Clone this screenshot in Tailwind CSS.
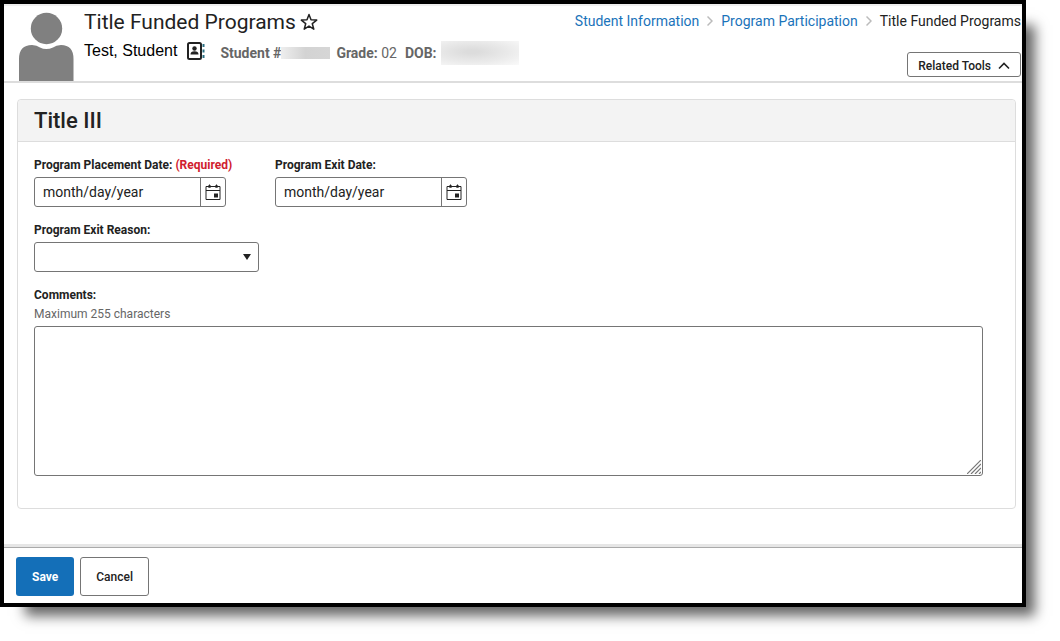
<!DOCTYPE html>
<html lang="en">
<head>
    <meta charset="UTF-8" />
    <meta name="viewport" content="width=device-width, initial-scale=1.0"/>
    <title>Title Funded Programs</title>
    <script src="https://cdn.jsdelivr.net/npm/@tailwindcss/browser@4"></script>
</head>
<body class="bg-white pr-[34px] pb-[34px] font-[Roboto,sans-serif] text-[#222]">
<div class="flex min-h-[calc(100vh-34px)] flex-col border-4 border-black bg-white shadow-[17px_17px_12px_-8px_rgba(0,0,0,0.6)]">

    <!-- Student header -->
    <header class="flex justify-between border-b-2 border-[#ddd] shadow-[inset_0_2px_1px_#eee]">
        <div class="flex">
            <svg class="mt-2 ml-3.5 h-[69px] w-[56px]" viewBox="0 0 56 69" fill="#808080" aria-hidden="true">
                <circle cx="28.500" cy="16.500" r="15.700"/>
                <path d="M1 69V47Q1 33 14 33Q19 33 22 35.500Q28 38.500 35 35.500Q38 33 43 33Q55.500 33 55.500 47V69Z"/>
            </svg>
            <div class="ml-2.5 pt-1">
                <div class="flex items-center gap-1">
                    <h1 class="text-[21px] leading-7">Title Funded Programs</h1>
                    <button type="button" aria-label="Add to favorites">
                        <svg class="size-[18px]" viewBox="0 0 18 18" fill="none" stroke="#222" stroke-width="1.500" stroke-linejoin="round">
                            <path d="M9 1.500L11 6.700L16.700 7.100L12.300 10.700L13.800 16.200L9 13.100L4.200 16.200L5.700 10.700L1.300 7.100L7 6.700Z"/>
                        </svg>
                    </button>
                </div>
                <div class="flex h-[30px] items-center text-sm leading-5 text-[#666]">
                    <span class="font-['Liberation_Sans',sans-serif] text-base leading-6 text-black">Test, Student</span>
                    <svg class="ml-[9px] h-[20px] w-[20px]" viewBox="0 0 20 20" aria-hidden="true">
                        <rect x="2" y="2" width="13" height="16" rx="1.500" fill="none" stroke="#222" stroke-width="2"/>
                        <circle cx="8.500" cy="7.500" r="2.200" fill="#222"/>
                        <path d="M4.500 13.500Q4.500 10.300 8.500 10.300Q12.500 10.300 12.500 13.500Z" fill="#222"/>
                        <path d="M17.500 3V6M17.500 8.500V11.500M17.500 14V17" stroke="#2a7083" stroke-width="2"/>
                    </svg>
                    <span class="ml-3.5 pt-1 font-bold">Student #</span>
                    <span class="mt-1 h-3 w-[49px] bg-linear-to-r from-[#eee] via-[#d3d3d3] to-[#d6d6d6]"></span>
                    <span class="ml-1.5 pt-1"><b>Grade:</b> 02</span>
                    <span class="ml-2 pt-1 font-bold">DOB:</span>
                    <span class="mt-1 ml-1 h-6 w-[78px] bg-[radial-gradient(ellipse_at_40%_45%,#dcdcdc_10%,#eaeaea_55%,#fafafa_100%)]"></span>
                </div>
            </div>
        </div>
        <div class="flex flex-col items-end justify-between pt-[7px] pr-px pb-1">
            <nav class="flex items-center gap-2 text-sm" aria-label="Breadcrumb">
                <a href="#" class="text-[#1a73ba]">Student Information</a>
                <svg class="h-3 w-1.5" viewBox="0 0 6 12" fill="none" stroke="#bbb" stroke-width="1.500"><path d="M0.500 1.500L5 6L0.500 10.500"/></svg>
                <a href="#" class="text-[#1a73ba]">Program Participation</a>
                <svg class="h-3 w-1.5" viewBox="0 0 6 12" fill="none" stroke="#bbb" stroke-width="1.500"><path d="M0.500 1.500L5 6L0.500 10.500"/></svg>
                <span>Title Funded Programs</span>
            </nav>
            <button type="button" class="flex h-[25px] items-center gap-[7px] rounded-[3px] border border-[#757575] px-2.5 pt-0.5 text-xs font-medium">
                Related Tools
                <svg class="h-2 w-3" viewBox="0 0 12 8" fill="none" stroke="#222" stroke-width="1.600"><path d="M1 6.500L6 1.500L11 6.500"/></svg>
            </button>
        </div>
    </header>

    <main class="flex-1 pt-4 pr-1.5 pb-[35px] pl-[13px]">
        <section class="rounded border border-[#ddd]">
            <h2 class="rounded-t border-b border-[#ddd] bg-[#f3f3f3] px-4 pt-[7px] pb-1.5 text-[22px] leading-7 font-medium">Title III</h2>
            <form id="programForm" class="flex flex-col gap-[15px] px-4 pt-[15px] pb-8 text-xs leading-4">
                <div class="flex gap-[43px]">
                    <div class="flex w-[198px] flex-col gap-1">
                        <label for="placementDate" class="font-bold whitespace-nowrap">Program Placement Date: <span class="text-[#d0202e]">(Required)</span></label>
                        <div class="flex h-[30px] w-48 rounded-[3px] border border-[#757575]">
                            <input id="placementDate" type="text" placeholder="month/day/year" class="min-w-0 flex-1 px-2 text-sm outline-none placeholder:text-[#222]"/>
                            <button type="button" aria-label="Choose placement date" class="flex w-[25px] items-center justify-center border-l border-[#757575]">
                                <svg class="size-4" viewBox="0 0 16 16" fill="none" stroke="#222"><path d="M1 2.500H15V15.500H1ZM1 6.500H15"/><path d="M3 2.500H6M10 2.500H13" stroke-width="2"/><path d="M4.500 0.500V3.500M11.500 0.500V3.500"/><rect x="9" y="9.500" width="4" height="4" fill="#222" stroke="none"/></svg>
                            </button>
                        </div>
                    </div>
                    <div class="flex flex-col gap-1">
                        <label for="exitDate" class="font-bold">Program Exit Date:</label>
                        <div class="flex h-[30px] w-48 rounded-[3px] border border-[#757575]">
                            <input id="exitDate" type="text" placeholder="month/day/year" class="min-w-0 flex-1 px-2 text-sm outline-none placeholder:text-[#222]"/>
                            <button type="button" aria-label="Choose exit date" class="flex w-[25px] items-center justify-center border-l border-[#757575]">
                                <svg class="size-4" viewBox="0 0 16 16" fill="none" stroke="#222"><path d="M1 2.500H15V15.500H1ZM1 6.500H15"/><path d="M3 2.500H6M10 2.500H13" stroke-width="2"/><path d="M4.500 0.500V3.500M11.500 0.500V3.500"/><rect x="9" y="9.500" width="4" height="4" fill="#222" stroke="none"/></svg>
                            </button>
                        </div>
                    </div>
                </div>

                <div class="flex flex-col gap-1">
                    <label for="exitReason" class="font-bold">Program Exit Reason:</label>
                    <div class="relative w-[225px]">
                        <select id="exitReason" class="block h-[30px] w-full appearance-none rounded-[3px] border border-[#757575] bg-white px-2 text-sm">
                            <option value=""></option>
                        </select>
                        <svg class="pointer-events-none absolute top-3 right-2 h-1.5 w-2" viewBox="0 0 8 6" fill="#222"><path d="M0 0H8L4 6Z"/></svg>
                    </div>
                </div>

                <div class="mr-4 flex flex-col">
                    <label for="comments" class="font-bold">Comments:</label>
                    <p id="commentsHint" class="mt-[3px] mb-1 leading-4 text-[#666]">Maximum 255 characters</p>
                    <div class="relative">
                        <textarea id="comments" maxlength="255" aria-describedby="commentsHint" class="block h-[150px] w-full resize-none rounded-[3px] border border-[#757575] p-2 text-sm"></textarea>
                        <svg class="pointer-events-none absolute right-0.5 bottom-0.5 size-3.5" viewBox="0 0 14 14" fill="none" stroke="#777" stroke-width="1.200"><path d="M0 14L14 0M4 14L14 4M8 14L14 8M12 14L14 12"/></svg>
                    </div>
                </div>
            </form>
        </section>
    </main>

    <!-- Actions -->
    <footer class="border-t-[3px] border-[#e6e6e6]">
        <div class="flex gap-1.5 border-t border-[#aaa] px-3 pt-[9px] pb-[7px] text-xs font-medium">
            <button type="submit" form="programForm" class="h-[39px] rounded-[3px] bg-[#146fb8] px-4 font-bold text-white">Save</button>
            <button type="button" class="h-[39px] rounded-[3px] border border-[#757575] bg-white px-[15px]">Cancel</button>
        </div>
    </footer>

</div>
</body>
</html>
